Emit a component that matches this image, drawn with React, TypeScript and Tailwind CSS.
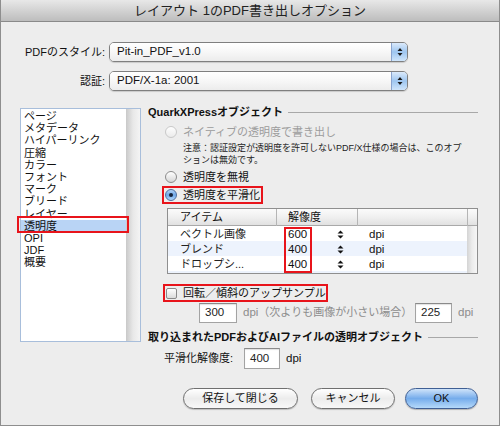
import React from "react";

const Radio = ({ checked, disabled }: { checked?: boolean; disabled?: boolean }) => {
  const cls = disabled
    ? "border-[#c9c9c9] bg-gradient-to-b from-[#fefefe] to-[#ebebeb]"
    : checked
    ? "border-[#4d6d9e] bg-gradient-to-b from-[#b4d4f6] via-[#6ea7e8] to-[#b0d6f9]"
    : "border-[#8b8b8b] bg-gradient-to-b from-[#ffffff] to-[#d6d6d6]";
  return (
    <span className={`flex h-[12px] w-[12px] shrink-0 items-center justify-center rounded-full border ${cls}`}>
      {checked && <span className="h-[4px] w-[4px] rounded-full bg-[#15233a]" />}
    </span>
  );
};

const Spin = () => (
  <svg width="7" height="9" viewBox="0 0 7 9">
    <path d="M3.5 0.5L6.5 3.5H0.5Z M0.5 5.5H6.5L3.5 8.5Z" fill="#111" />
  </svg>
);

const SelectBox = ({ value }: { value: string }) => (
  <div className="ml-[4px] flex h-[20px] w-[299px] overflow-hidden rounded-[5px] border border-[#7f7f7f] shadow-[0_1px_1px_rgba(0,0,0,0.15)]">
    <div className="flex flex-1 items-center bg-gradient-to-b from-[#ffffff] via-[#f7f7f7] to-[#ececec] pl-[7px] text-[11.5px] text-[#111]">
      {value}
    </div>
    <div className="flex w-[16px] items-center justify-center border-l border-[#8aa4cf] bg-gradient-to-b from-[#dbeafb] via-[#9ec6f0] to-[#cfe5fb]">
      <svg width="6" height="10" viewBox="0 0 6 10">
        <path d="M3 1L5.5 4H0.5Z M0.5 6H5.5L3 9Z" fill="#1b1b1b" />
      </svg>
    </div>
  </div>
);

const Input = ({ value, w }: { value: string; w: string }) => (
  <div className={`flex h-[20px] items-center border border-[#a3a3a3] border-t-[#8a8a8a] bg-white pl-[5px] text-[11.5px] text-[#222] shadow-[inset_0_1px_1px_rgba(0,0,0,0.12)] ${w}`}>
    {value}
  </div>
);

const items = ["ページ", "メタデータ", "ハイパーリンク", "圧縮", "カラー", "フォント", "マーク", "ブリード", "レイヤー", "透明度", "OPI", "JDF", "概要"];

const rows = [
  { name: "ベクトル画像", v: "600", bg: "bg-white" },
  { name: "ブレンド", v: "400", bg: "bg-[#edf3fd]" },
  { name: "ドロップシ...", v: "400", bg: "bg-white" },
];

export default function App() {
  return (
    <div className="flex h-[426px] w-[500px] flex-col overflow-hidden border border-t-0 border-[#8e8e8e] bg-[#ededed] font-['Liberation_Sans','Noto_Sans_CJK_JP',sans-serif] text-[#111]">
      {/* title bar */}
      <div className="flex h-[22px] shrink-0 items-center justify-center border-b border-[#8a8a8a] bg-gradient-to-b from-[#e8e8e8] to-[#bdbdbd] text-[13px] text-[#222]">
        レイアウト 1のPDF書き出しオプション
      </div>

      {/* select rows */}
      <div className="mt-[20px] flex h-[20px] items-center">
        <div className="w-[104px] text-right text-[11px]">PDFのスタイル:</div>
        <SelectBox value="Pit-in_PDF_v1.0" />
      </div>
      <div className="mt-[9px] flex h-[20px] items-center">
        <div className="w-[104px] text-right text-[11px]">認証:</div>
        <SelectBox value="PDF/X-1a: 2001" />
      </div>

      {/* main */}
      <div className="mt-[14px] flex">
        {/* list */}
        <div className="ml-[19px] mt-[3px] flex h-[234px] w-[121px] border border-[#a8bedb] bg-white">
          <div className="flex-1 pt-[1px] text-[11px] leading-[12.2px]">
            {items.map((it) => (
              <div key={it} className={`relative pl-[3px] ${it === "透明度" ? "bg-[#b9d4f5]" : ""}`}>
                {it}
                {it === "透明度" && (
                  <span className="pointer-events-none absolute -left-[4px] -right-[3px] -top-[4px] -bottom-[1px] border-2 border-[#e8141b]" />
                )}
              </div>
            ))}
          </div>
          <div className="w-[14px] bg-gradient-to-r from-[#c9c9c9] via-[#e8e8e8] to-[#f4f4f4]" />
        </div>

        {/* right panel */}
        <div className="ml-[7px] flex w-[331px] flex-col">
          <div className="flex h-[14px] items-center pr-[1px]">
            <span className="text-[11px] font-bold">QuarkXPressオブジェクト</span>
            <span className="ml-[5px] h-0 flex-1 border-t border-[#a8a8a8]" />
          </div>

          <div className="ml-[17px] mt-[5px] flex h-[16px] items-center gap-[6px]">
            <Radio disabled />
            <span className="text-[11px] text-[#9c9c9c]">ネイティブの透明度で書き出し</span>
          </div>

          <div className="ml-[35px] mt-[2px] text-[9px] leading-[12px] text-[#222]">
            <div className="whitespace-nowrap">注意：認証設定が透明度を許可しないPDF/X仕様の場合は、このオプ</div>
            <div>ションは無効です。</div>
          </div>

          <div className="ml-[17px] mt-[3px] flex h-[16px] items-center gap-[6px]">
            <Radio />
            <span className="text-[11px]">透明度を無視</span>
          </div>

          <div className="ml-[14px] mt-[1px] flex h-[18px] w-[101px] items-center gap-[6px] border-2 border-[#e8141b] pl-[1px]">
            <Radio checked />
            <span className="text-[11px]">透明度を平滑化</span>
          </div>

          {/* table */}
          <div className="ml-[19px] mt-[4px] flex h-[66px] w-[311px] flex-col border border-[#8f8f8f] bg-white">
            <div className="grid h-[17px] grid-cols-[109px_81px_110px_9px] border-b border-[#a9a9a9] bg-gradient-to-b from-[#fbfbfb] via-[#f0f0f0] to-[#e1e1e1] text-[11px]">
              <div className="flex items-center border-r border-[#b5b5b5] pl-[12px]">アイテム</div>
              <div className="flex items-center border-r border-[#b5b5b5] pl-[11px]">解像度</div>
              <div className="border-r border-[#b5b5b5]" />
              <div />
            </div>
            <div className="flex flex-1">
              <div className="relative flex flex-1 flex-col">
                {rows.map((r) => (
                  <div key={r.name} className={`grid h-[15px] grid-cols-[109px_81px_109px] items-center text-[11px] ${r.bg}`}>
                    <div className="pl-[12px] text-[#222]">{r.name}</div>
                    <div className="flex items-center pl-[11px]">
                      <span className="w-[49px] text-[11.5px]">{r.v}</span>
                      <Spin />
                    </div>
                    <div className="pl-[11px] text-[11.5px]">dpi</div>
                  </div>
                ))}
                <div className="flex-1 bg-[#edf3fd]" />
                <span className="pointer-events-none absolute left-[116px] top-[1px] h-[46px] w-[28px] border-2 border-[#e8141b]" />
              </div>
              <div className="w-[10px] bg-gradient-to-r from-[#d4d4d4] via-[#ececec] to-[#f6f6f6]" />
            </div>
          </div>

          {/* checkbox */}
          <div className="ml-[15px] mt-[10px] flex h-[18px] w-[165px] items-center gap-[6px] border-2 border-[#e8141b] pl-[1px]">
            <span className="h-[11px] w-[11px] shrink-0 rounded-[2px] border border-[#8a8a8a] bg-gradient-to-b from-white to-[#dcdcdc]" />
            <span className="text-[11px]">回転／傾斜のアップサンプル</span>
          </div>

          <div className="ml-[51px] mt-[1px] flex h-[20px] items-center">
            <Input value="300" w="w-[38px]" />
            <span className="ml-[6px] w-[172px] whitespace-nowrap text-[11px] text-[#8c8c8c]">
              <span className="text-[11.5px]">dpi</span>（次よりも画像が小さい場合）
            </span>
            <Input value="225" w="w-[37px]" />
            <span className="ml-[6px] text-[11.5px] text-[#8c8c8c]">dpi</span>
          </div>

          <div className="mt-[7px] flex h-[14px] items-center pr-[1px]">
            <span className="whitespace-nowrap text-[11px] font-bold">取り込まれたPDFおよびAIファイルの透明オブジェクト</span>
            <span className="ml-[5px] h-0 flex-1 border-t border-[#a8a8a8]" />
          </div>

          <div className="ml-[16px] mt-[4px] flex h-[21px] items-center">
            <span className="w-[80px] text-[11px]">平滑化解像度:</span>
            <Input value="400" w="w-[36px] h-[21px]" />
            <span className="ml-[6px] text-[11.5px]">dpi</span>
          </div>
        </div>
      </div>

      {/* buttons */}
      <div className="ml-[182px] mt-[18px] flex h-[22px] items-center text-[11px]">
        <button className="flex h-[21px] w-[115px] items-center justify-center rounded-full border border-[#6f6f6f] bg-gradient-to-b from-[#ffffff] via-[#ececec] to-[#f8f8f8] shadow-[0_1px_1px_rgba(0,0,0,0.2)]">
          保存して閉じる
        </button>
        <button className="ml-[13px] flex h-[21px] w-[84px] items-center justify-center rounded-full border border-[#6f6f6f] bg-gradient-to-b from-[#ffffff] via-[#ececec] to-[#f8f8f8] shadow-[0_1px_1px_rgba(0,0,0,0.2)]">
          キャンセル
        </button>
        <button className="ml-[10px] flex h-[21px] w-[73px] items-center justify-center rounded-full border border-[#3f5f94] bg-gradient-to-b from-[#cfe3f9] via-[#75aceb] to-[#b5d9fa] text-[#111] shadow-[0_1px_1px_rgba(0,0,0,0.25)]">
          OK
        </button>
      </div>
    </div>
  );
}
